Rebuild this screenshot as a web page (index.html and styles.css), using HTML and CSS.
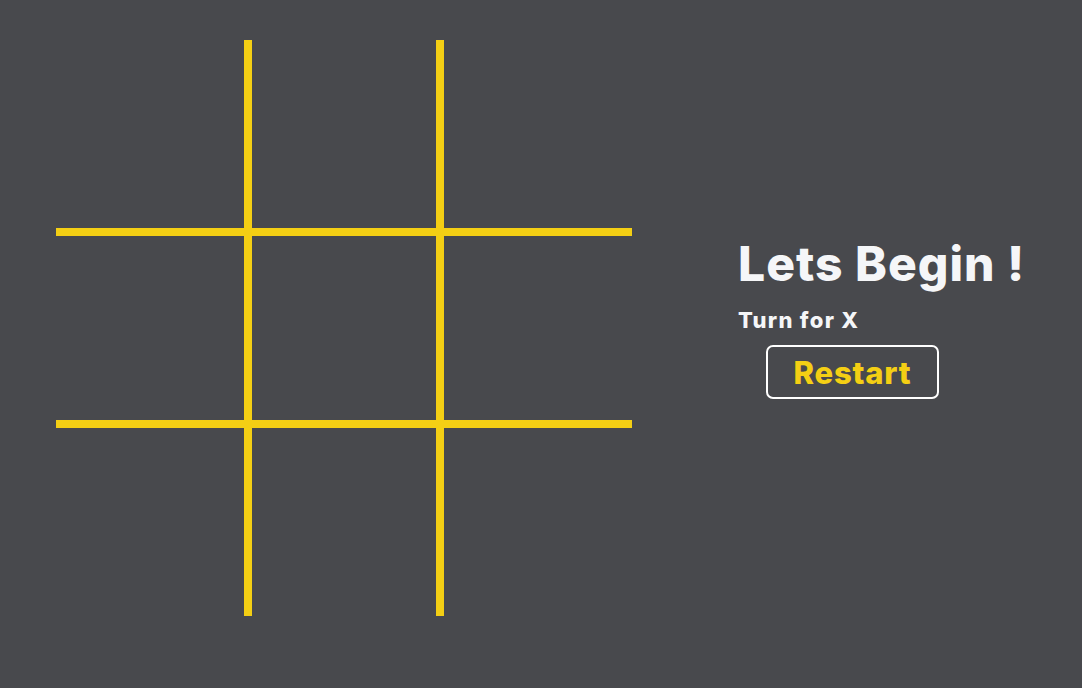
FILE: index.html
```html
<!DOCTYPE html>
<html lang="en">
<head>
<meta charset="utf-8">
<title>Tic Tac Toe</title>
<link rel="stylesheet" href="styles.css">
</head>
<body>
<main class="game">
  <div class="board">
    <div class="cell c-r c-b"></div>
    <div class="cell c-l c-r c-b"></div>
    <div class="cell c-l c-b"></div>
    <div class="cell c-t c-r c-b"></div>
    <div class="cell c-t c-l c-r c-b"></div>
    <div class="cell c-t c-l c-b"></div>
    <div class="cell c-t c-r"></div>
    <div class="cell c-t c-l c-r"></div>
    <div class="cell c-t c-l"></div>
  </div>
  <section class="info">
    <h1 class="title">Lets Begin !</h1>
    <p class="turn">Turn for X</p>
    <button class="restart">Restart</button>
  </section>
</main>
</body>
</html>
```
FILE: styles.css
```css
* { box-sizing: border-box; }
html, body { margin: 0; padding: 0; }
body {
  background: #48494d;
  font-family: "Inter", "Open Sans", sans-serif;
  width: 1082px;
  height: 688px;
  overflow: hidden;
}
.game {
  display: flex;
  align-items: flex-start;
  padding: 40px 0 0 56px;
}
.board {
  display: grid;
  grid-template-columns: repeat(3, 192px);
  grid-template-rows: repeat(3, 192px);
  width: 576px;
  height: 576px;
}
.cell { border: 0 solid #f4cf14; }
.c-t { border-top-width: 4px; }
.c-b { border-bottom-width: 4px; }
.c-l { border-left-width: 4px; }
.c-r { border-right-width: 4px; }
.info {
  margin-left: 106px;
  margin-top: 196px;
  display: flex;
  flex-direction: column;
  align-items: flex-start;
}
.title {
  margin: 0;
  color: #f5f6f8;
  font-size: 48px;
  font-weight: 800;
  line-height: 56px;
  letter-spacing: 1px;
}
.turn {
  margin: 15px 0 0 0;
  color: #f5f6f8;
  font-size: 22px;
  font-weight: 800;
  line-height: 26px;
  letter-spacing: 1.3px;
}
.restart {
  margin: 12px 0 0 28px;
  width: 173px;
  height: 54px;
  background: transparent;
  border: 2px solid #ffffff;
  border-radius: 7px;
  color: #f4cf14;
  font-family: inherit;
  font-size: 31px;
  font-weight: 800;
  letter-spacing: 0.8px;
  padding: 0;
  cursor: pointer;
}
```
